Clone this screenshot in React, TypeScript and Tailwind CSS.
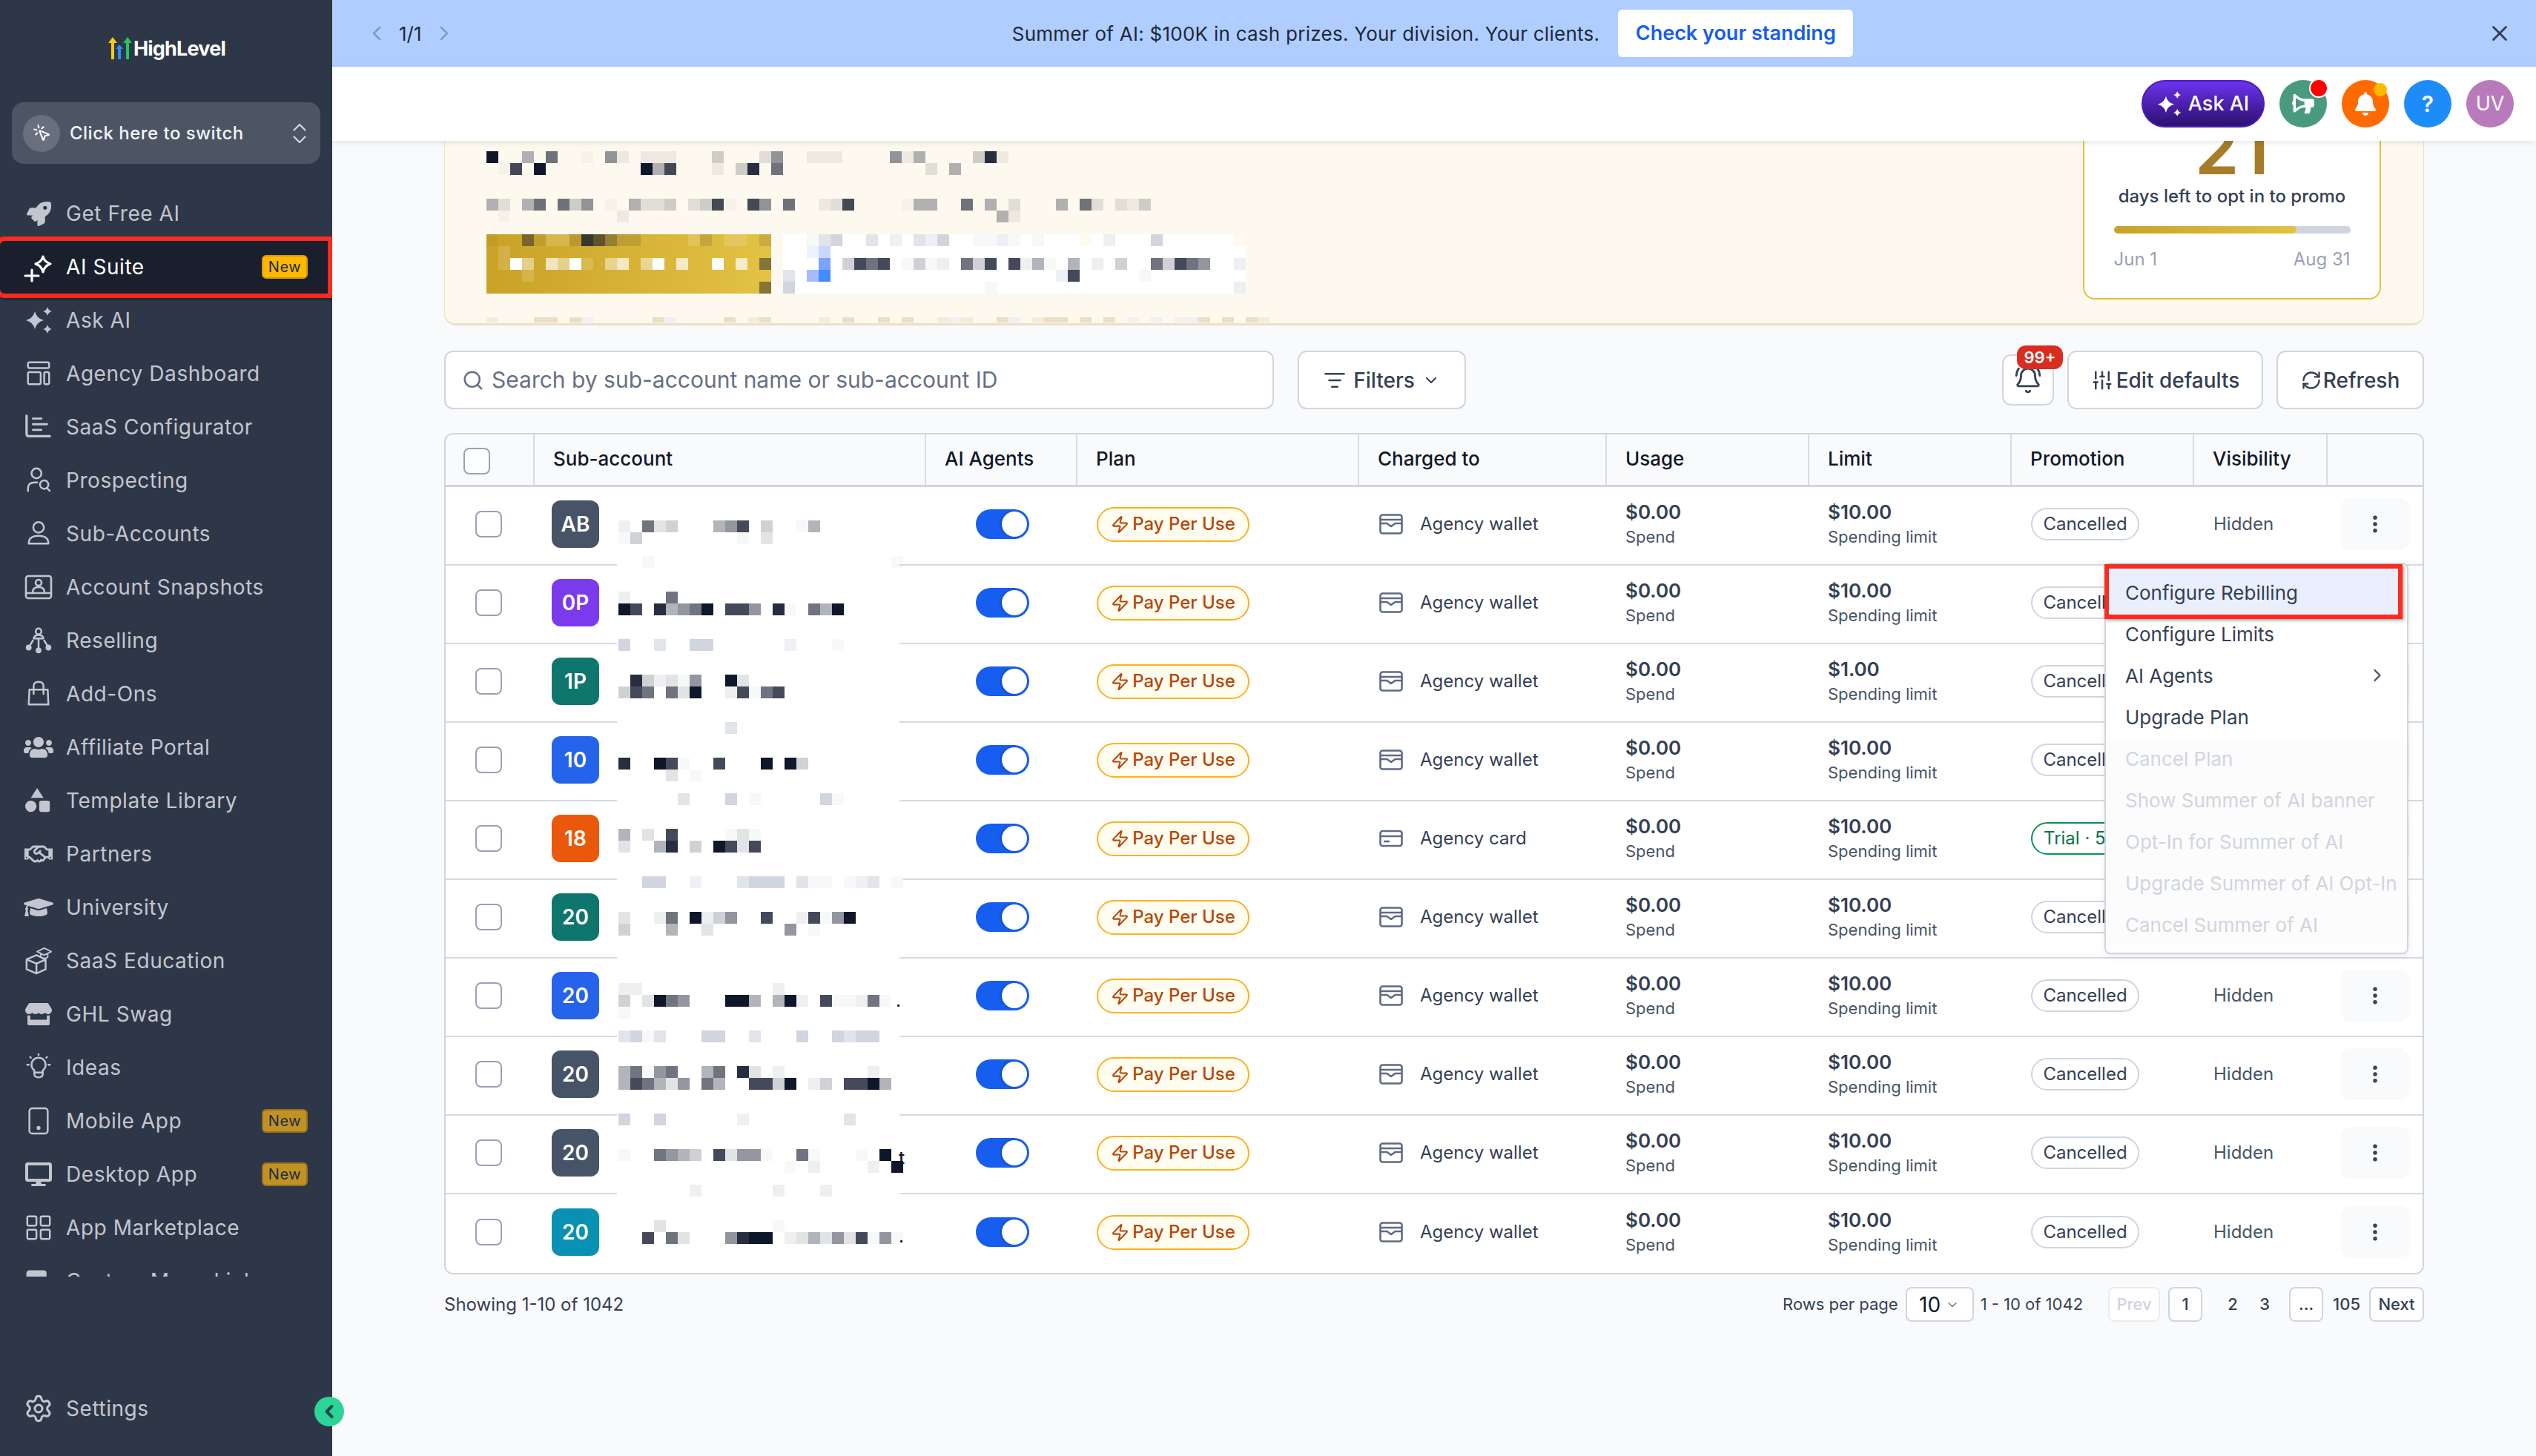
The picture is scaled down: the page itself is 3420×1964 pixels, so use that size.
import React from "react";
import {
  BellRing, ChevronDown, ChevronLeft, ChevronRight, ChevronsUpDown, EllipsisVertical, ListFilter,
  MousePointerClick, RefreshCw, Search, Settings, SlidersVertical, X, Zap,
} from "lucide-react";
import { FaBell, FaBullhorn, FaDesktop, FaGraduationCap, FaRegHandshake, FaRocket, FaStore, FaUsers } from "react-icons/fa";

const CELL: Record<string, string> = {
  "1": "rgba(15,23,42,.03)", "2": "rgba(15,23,42,.07)", "3": "rgba(15,23,42,.12)", "4": "rgba(15,23,42,.2)",
  "5": "rgba(15,23,42,.32)", "6": "rgba(15,23,42,.45)", "7": "rgba(15,23,42,.6)", "8": "rgba(15,23,42,.78)",
  x: "rgba(15,23,42,.9)", "9": "#0f172a", l: "#d1d5e0", m: "#e1e5e9", n: "#eff0f5", o: "#f7f8fa",
  w: "#ffffff", W: "rgba(255,255,255,.15)", Y: "rgba(255,255,255,.45)", Z: "rgba(255,255,255,.7)",
  c: "#fefaf0", t: "#e9dec6", u: "#f3ecdc", b: "#428cff", P: "#7ba3ff", p: "#a5baff", q: "#c7d7ff", r: "#eef2ff",
};

function MosaicRow({ cells, h = 16 }: { cells: string; h?: number }) {
  return (
    <div className="flex" style={{ height: h }}>
      {cells.split("").map((ch, i) => (
        <div key={i} className="w-4 shrink-0" style={{ background: CELL[ch] ?? "transparent" }} />
      ))}
    </div>
  );
}

const tableMosaic: Record<number, string> = {
  700: "2.734...568.4..15",
  716: "14........1.3",
  748: "..1....................1",
  796: "2...7",
  812: "98.x5679.886.x1.759",
  860: "l..m..ll......n...o",
  908: ".x42316..93",
  924: "487.739..28178",
  972: ".........m",
  1020: "x..981..8...9.94",
  1036: "....3.1",
  1068: ".....m...l.1.....lo",
  1116: "5.3.8....131",
  1132: "3..5x.4.9838",
  1180: "..ll..n...mlll.moo.onm.o",
  1228: "3..27.9246..8..28169",
  1244: "4...5..3......6.1",
  1324: "22...........2",
  1340: "4.3976...995.592.811271",
  1356: "1",
  1388: "mlom...ll..m...l..lmll",
  1436: "57167..57.x3.2.......2",
  1452: "587536.75..8849.24.8895",
  1500: "l..l......n........m",
  1548: "1..7654.83661..71...1.9",
  1564: "..............1.2....2.9",
  1596: "......2......2...2",
  1644: "...3.........1",
  1660: "..8.73...6x99.2353638161",
};

const nav: { label: string; icon: React.ReactNode; badge?: "bright" | "dim"; active?: boolean }[] = [];

function Svg({ children, w = 40 }: { children: React.ReactNode; w?: number }) {
  return (
    <svg width={w} height={w} viewBox="0 0 40 40" fill="none" stroke="currentColor" strokeWidth="2.6" strokeLinecap="round" strokeLinejoin="round">
      {children}
    </svg>
  );
}

const Spark = ({ cx, cy, r }: { cx: number; cy: number; r: number }) => (
  <path
    fill="currentColor"
    stroke="none"
    d={`M${cx} ${cy - r}Q${cx + r * 0.2} ${cy - r * 0.2} ${cx + r} ${cy}Q${cx + r * 0.2} ${cy + r * 0.2} ${cx} ${cy + r}Q${cx - r * 0.2} ${cy + r * 0.2} ${cx - r} ${cy}Q${cx - r * 0.2} ${cy - r * 0.2} ${cx} ${cy - r}Z`}
  />
);

nav.push(
  { label: "Get Free AI", icon: <FaRocket size={33} /> },
  {
    label: "AI Suite", active: true, badge: "bright",
    icon: (
      <Svg w={42}>
        <path d="M2 32h18M11 24v15" strokeWidth="3.2" />
        <path d="M26 6q1.5 7 10 10q-8.500 3-10 11q-1.500-8-10-11q8.500-3 10-10Z" strokeWidth="3.2" />
      </Svg>
    ),
  },
  { label: "Ask AI", icon: <Svg><Spark cx={15} cy={20} r={12} /><Spark cx={32} cy={8} r={6} /><Spark cx={32} cy={32} r={6} /></Svg> },
  {
    label: "Agency Dashboard",
    icon: <Svg w={38}><rect x="5" y="4" width="30" height="8" rx="2" /><rect x="5" y="18" width="18" height="17" rx="2" /><rect x="28" y="18" width="7" height="17" rx="2" /></Svg>,
  },
  {
    label: "SaaS Configurator",
    icon: <Svg w={38}><path d="M3 4v26q0 3 3 3h30" strokeWidth="3.4" /><path d="M12 8h12M12 16h20M12 24h12" strokeWidth="3" /></Svg>,
  },
  {
    label: "Prospecting",
    icon: <Svg w={38}><circle cx="17" cy="10" r="7" /><path d="M5 35v-4q0-8 10-8h3" /><circle cx="28" cy="26" r="6" /><path d="M32 31l4 4" /></Svg>,
  },
  {
    label: "Sub-Accounts",
    icon: <Svg w={38}><circle cx="20" cy="11" r="7.500" /><path d="M6 34q0-11 14-11t14 11Z" /></Svg>,
  },
  {
    label: "Account Snapshots",
    icon: <Svg w={40}><rect x="3" y="5" width="34" height="30" rx="3" /><path d="M3 28h34" /><circle cx="20" cy="14" r="4" /><path d="M12 27q0-7 8-7t8 7" /></Svg>,
  },
  {
    label: "Reselling",
    icon: <Svg w={38}><circle cx="20" cy="7" r="4" /><path d="M13 17q1-5 7-5t7 5ZM20 17v15M12 20l-5 8M28 20l5 8" /><circle cx="6" cy="30" r="2.800" fill="currentColor" /><circle cx="20" cy="34" r="2.800" fill="currentColor" /><circle cx="34" cy="30" r="2.800" fill="currentColor" /></Svg>,
  },
  {
    label: "Add-Ons",
    icon: <Svg w={38}><path d="M7 14h26l1 21H6Z" /><path d="M13 20v-11q0-6 7-6t7 6v11" /></Svg>,
  },
  { label: "Affiliate Portal", icon: <FaUsers size={40} /> },
  {
    label: "Template Library",
    icon: <Svg w={38}><path fill="currentColor" stroke="none" d="M18 2l9 14H9Z" /><circle cx="9" cy="28" r="8" fill="currentColor" stroke="none" /><rect x="21" y="20" width="15" height="16" rx="3" fill="currentColor" stroke="none" /></Svg>,
  },
  { label: "Partners", icon: <FaRegHandshake size={38} /> },
  { label: "University", icon: <FaGraduationCap size={40} /> },
  {
    label: "SaaS Education",
    icon: <Svg w={38}><path d="M3 18l14-6 13 6v14l-13 6-14-6ZM3 18l14 6 13-6M17 24v14" /><path d="M18 7l10-5 10 5-10 5ZM23 10v5q5 3 10 0v-5" strokeWidth="2" /></Svg>,
  },
  { label: "GHL Swag", icon: <FaStore size={36} /> },
  {
    label: "Ideas",
    icon: <Svg w={38}><path d="M14 24q-4-3-4-8a10 10 0 0 1 20 0q0 5-4 8v5q0 5-6 5t-6-5Z" /><path d="M20 1v1M4 16h2M34 16h2M8 5l1 1M32 5l-1 1M14 27h12" /></Svg>,
  },
  {
    label: "Mobile App", badge: "dim",
    icon: <Svg w={38}><rect x="7" y="2" width="26" height="36" rx="4" /><circle cx="20" cy="30" r="1.500" fill="currentColor" /></Svg>,
  },
  { label: "Desktop App", badge: "dim", icon: <FaDesktop size={36} /> },
  {
    label: "App Marketplace",
    icon: <Svg w={38}><rect x="4" y="4" width="13" height="13" rx="2" /><rect x="23" y="4" width="13" height="13" rx="2" /><rect x="4" y="23" width="13" height="13" rx="2" /><rect x="23" y="23" width="13" height="13" rx="2" /></Svg>,
  },
  {
    label: "Custom Menu Links",
    icon: <Svg w={38}><rect x="4" y="6" width="26" height="28" rx="3" fill="currentColor" /></Svg>,
  },
);

function NavItem({ item }: { item: (typeof nav)[number] }) {
  return (
    <div
      className={
        "flex h-[72px] shrink-0 items-center pl-[32px] pr-[33px] text-[28px] tracking-[0.02em] " +
        (item.active ? "relative z-10 text-white" : "text-[#c3c6ce]")
      }
    >
      {item.active && (
        <div className="absolute left-[-6px] right-0 top-[-5px] bottom-[-6px] -z-10 rounded-l-xl border-[6px] border-[#ff2a1f] bg-[#1a1f2e] shadow-[2px_2px_4px_rgba(0,0,0,.4)]" />
      )}
      <span className="flex w-[40px] shrink-0 justify-center">{item.icon}</span>
      <span className="ml-[17px] flex-1 whitespace-nowrap">{item.label}</span>
      {item.badge && (
        <span
          className={
            "flex h-[32px] w-[62px] items-center justify-center rounded-md border-2 text-[20px] tracking-[0.03em] " +
            (item.badge === "bright"
              ? "border-[#d89a06] bg-[#ffb800] text-[#1a2b45]"
              : "border-[#9a6f1f] bg-[#c09224] text-[#1c2b45]")
          }
        >
          New
        </span>
      )}
    </div>
  );
}

function Sidebar() {
  return (
    <aside className="relative z-20 flex h-[1964px] w-[448px] shrink-0 flex-col bg-[#2e3748]">
      <div className="flex h-[138px] shrink-0 items-start justify-center pl-[2px] pt-[50px]">
        <svg width="32" height="30" viewBox="0 0 32 30" className="mr-[2px]">
          <path d="M0 8L6 0l6 8H8v22H4V8Z" fill="#facc15" />
          <path d="M10 16l5-6 5 6h-3v14h-4V16Z" fill="#2f8cf0" />
          <path d="M20 8l6-8 6 8h-4v22h-4V8Z" fill="#22c55e" />
        </svg>
        <span className="text-[27px] font-bold leading-[32px] tracking-[-0.03em] text-white">HighLevel</span>
      </div>
      <div className="mx-4 flex h-[83px] shrink-0 items-center rounded-2xl bg-[#4b5564] pl-[15px] pr-[10px]">
        <span className="flex h-[50px] w-[50px] items-center justify-center rounded-full bg-[#687080] text-white">
          <MousePointerClick size={25} strokeWidth={2} />
        </span>
        <span className="ml-[13px] flex-1 whitespace-nowrap text-[24px] font-medium tracking-[0.02em] text-[#f3f4f6]">Click here to switch</span>
        <ChevronsUpDown size={36} strokeWidth={1.5} className="text-[#d1d5db]" />
      </div>
      <nav className="mt-[31px] flex h-[1470px] shrink-0 flex-col overflow-hidden pr-0">
        {nav.map((item) => (
          <NavItem key={item.label} item={item} />
        ))}
      </nav>
      <div className="mt-[142px] flex h-[72px] shrink-0 items-center pl-[32px] text-[28px] tracking-[0.02em] text-[#c3c6ce]">
        <span className="flex w-[40px] justify-center"><Settings size={40} strokeWidth={1.8} /></span>
        <span className="ml-[17px]">Settings</span>
      </div>
      <button className="absolute left-[424px] top-[1884px] flex h-[40px] w-[40px] items-center justify-center rounded-full bg-[#2dd498] text-[#0e4a44]">
        <ChevronLeft size={28} strokeWidth={3.4} />
      </button>
    </aside>
  );
}

function Banner() {
  return (
    <div className="relative flex h-[90px] shrink-0 items-center justify-center bg-[#b0cdff] text-[#1d2939]">
      <div className="absolute left-[44px] flex items-center text-[26px]">
        <ChevronLeft size={32} strokeWidth={1.8} className="text-[#7d93bf]" />
        <span className="mx-[14px]">1/1</span>
        <ChevronRight size={32} strokeWidth={1.8} className="text-[#7d93bf]" />
      </div>
      <span className="ml-[-4px] text-[26px] tracking-[0.01em]">Summer of AI: $100K in cash prizes. Your division. Your clients.</span>
      <button className="ml-[25px] flex h-[64px] w-[317px] items-center justify-center rounded-md bg-white text-[27px] font-semibold text-[#155eef]">
        Check your standing
      </button>
      <X size={34} strokeWidth={2} className="absolute right-[32px] text-[#344054]" />
    </div>
  );
}

function TopBar() {
  const circle = "relative flex h-[64px] w-[64px] items-center justify-center rounded-full text-white";
  return (
    <header className="relative z-10 flex h-[100px] shrink-0 items-center justify-end gap-[20px] bg-white pr-[30px] shadow-[0_2px_8px_rgba(16,24,40,.1)]">
      <button className="flex h-[64px] w-[166px] items-center justify-center gap-[8px] rounded-full border-2 border-[#4a1fb8] bg-gradient-to-b from-[#6d33f0] to-[#2d1070] text-[27px] font-medium text-white">
        <svg width="34" height="36" viewBox="0 0 40 40" className="text-white"><Spark cx={14} cy={21} r={13} /><Spark cx={32} cy={6} r={6} /><Spark cx={32} cy={34} r={6} /></svg>
        Ask AI
      </button>
      <span className={circle + " bg-[#4a9a80]"}>
        <FaBullhorn size={30} className="-scale-x-100" />
        <span className="absolute right-[-2px] top-[-2px] h-[26px] w-[26px] rounded-full border-2 border-white bg-[#ff0000]" />
      </span>
      <span className={circle + " bg-[#ff6a00]"}>
        <FaBell size={32} />
        <span className="absolute right-[3px] top-[4px] h-[18px] w-[18px] rounded-full bg-[#ffb800]" />
      </span>
      <span className={circle + " bg-[#1e8cf8] text-[30px] font-semibold"}>?</span>
      <span className={circle + " bg-[#b87abb] text-[27px]"}>UV</span>
    </header>
  );
}

function Promo() {
  return (
    <section className="mx-auto mt-[-2px] flex h-[251px] w-[2670px] justify-between overflow-hidden rounded-b-2xl border-x border-b-[3px] border-[#eedfc4] bg-[#fef9ef] pl-[56px] pr-[57px]">
      <div className="flex flex-col">
        <div className="h-[16px]" />
        <MosaicRow cells="9..5.7..1.62.222...4...36..222....625....4x2" />
        <MosaicRow cells=".18.9........958...2.4x.7............3.5" />
        <div className="h-[32px]" />
        <MosaicRow cells="53.57.746.1.5334.3481.86.7..238....155..7.5.3...5.73.324" />
        <MosaicRow cells=".1.........2...............................52" />
        <div className="h-[16px]" />
        <div className="flex">
          <div className="w-[384px] bg-gradient-to-r from-[#c9a227] to-[#e3c244]">
            <MosaicRow cells="1..62WW387533....W3.WW.3" />
            <MosaicRow cells=".W" />
            <MosaicRow cells=".WwY.ZYwW.YZ.Yw.Z..w.Z.6" />
            <MosaicRow cells="...W" />
            <MosaicRow cells=".......................6" />
          </div>
          <div className="ml-4 w-[624px] bg-white">
            <MosaicRow cells="..1ml..m.n.mnl..oono.o...c.n...l......c" />
            <MosaicRow cells="..rq" />
            <MosaicRow cells="...P.4878.1412.748.8251.5.2.4..74876..2" />
            <MosaicRow cells="m.pb...................n8.....o" />
            <MosaicRow cells="l................o....................2" />
          </div>
        </div>
        <div className="h-[32px]" />
        <MosaicRow h={7} cells="u...tt.tn.....tn....t.ut....u.t..t.t..unu..tn.utt.t.t.n.n.nnt.t.tu" />
      </div>
      <div className="flex h-[216px] w-[402px] shrink-0 flex-col items-center overflow-hidden rounded-b-2xl border-x-2 border-b-2 border-[#e8bc3e] bg-white">
        <div className="mt-[-36px] h-[80px] text-[96px] font-semibold leading-[96px] text-[#a67c2a]">21</div>
        <div className="mt-[17px] whitespace-nowrap text-[24px] font-medium leading-[32px] text-[#344054]">days left to opt in to promo</div>
        <div className="mt-[24px] h-[10px] w-[319px] overflow-hidden rounded-full bg-[#d0d5dd]">
          <div className="h-full w-[246px] rounded-full bg-gradient-to-r from-[#c9a227] to-[#e3c244]" />
        </div>
        <div className="mt-[19px] flex w-[319px] justify-between text-[24px] leading-[32px] text-[#98a2b3]">
          <span>Jun 1</span>
          <span>Aug 31</span>
        </div>
      </div>
    </section>
  );
}

function Toolbar() {
  const btn = "flex h-[79px] items-center justify-center rounded-xl border-2 border-[#d0d5dd] bg-white text-[28px] font-medium text-[#344054]";
  return (
    <div className="mt-[34px] flex items-center">
      <div className="flex h-[79px] w-[1119px] items-center rounded-xl border-2 border-[#d0d5dd] bg-white pl-[22px] text-[30px] text-[#667085]">
        <Search size={30} strokeWidth={2} className="mr-[10px]" />
        Search by sub-account name or sub-account ID
      </div>
      <button className={btn + " ml-[32px] w-[227px] gap-[10px]"}>
        <ListFilter size={30} strokeWidth={2} />
        Filters
        <ChevronDown size={24} strokeWidth={2} />
      </button>
      <div className="flex-1" />
      <button className="relative flex h-[69px] w-[70px] items-center justify-center rounded-xl border-2 border-[#d0d5dd] bg-white text-[#344054]">
        <BellRing size={38} strokeWidth={1.8} />
        <span className="absolute right-[-14px] top-[-14px] flex h-[32px] w-[62px] items-center justify-center rounded-xl bg-[#d92d20] text-[22px] font-semibold text-white">99+</span>
      </button>
      <button className={btn + " ml-[18px] w-[264px] gap-[4px]"}>
        <SlidersVertical size={30} strokeWidth={2} />
        Edit defaults
      </button>
      <button className={btn + " ml-[18px] w-[199px] gap-[2px]"}>
        <RefreshCw size={28} strokeWidth={2} />
        Refresh
      </button>
    </div>
  );
}

const GRID = "grid grid-cols-[120px_528px_204px_380px_334px_273px_273px_246px_180px_1fr]";

const rows = [
  { a: "AB", c: "bg-[#475467]", limit: "$10.00" },
  { a: "0P", c: "bg-[#7c3aed]", limit: "$10.00" },
  { a: "1P", c: "bg-[#0f766e]", limit: "$1.00" },
  { a: "10", c: "bg-[#2563eb]", limit: "$10.00" },
  { a: "18", c: "bg-[#ea580c]", limit: "$10.00", card: true, trial: true },
  { a: "20", c: "bg-[#0f766e]", limit: "$10.00" },
  { a: "20", c: "bg-[#2563eb]", limit: "$10.00" },
  { a: "20", c: "bg-[#475467]", limit: "$10.00" },
  { a: "20", c: "bg-[#475467]", limit: "$10.00" },
  { a: "20", c: "bg-[#0891b2]", limit: "$10.00" },
];

function Checkbox({ className = "" }: { className?: string }) {
  return <span className={"block h-[36px] w-[36px] rounded-[8px] border-2 border-[#98a2b3] bg-white " + className} />;
}

function Head({ children }: { children?: React.ReactNode }) {
  return (
    <div className="flex items-center border-r-2 border-[#d8dce3] pl-[25px] pb-[3px] text-[26px] font-medium text-[#101828] last:border-r-0">
      {children}
    </div>
  );
}

function Row({ r, last }: { r: (typeof rows)[number]; last: boolean }) {
  return (
    <div className={GRID + " h-[106px] bg-white " + (last ? "" : "border-b-2 border-[#d5d9e2]")}>
      <div className="flex items-center pl-[40px] pb-[4px]"><Checkbox /></div>
      <div className="flex items-center pl-[23px] pb-[4px]">
        <span className={"flex h-[64px] w-[64px] items-center justify-center rounded-[12px] text-[28px] font-semibold text-white " + r.c}>{r.a}</span>
      </div>
      <div className="flex items-center pl-[67px] pb-[4px]">
        <span className="relative h-[40px] w-[72px] rounded-full bg-[#155eef]">
          <span className="absolute right-[3px] top-[3px] h-[34px] w-[34px] rounded-full bg-white shadow-[-2px_0_3px_rgba(0,0,0,.2)]" />
        </span>
      </div>
      <div className="flex items-center pl-[26px] pb-[4px]">
        <span className="flex h-[47px] w-[206px] items-center justify-center gap-[4px] rounded-full border-2 border-[#fdb022] bg-[#fffcf0] text-[24px] font-medium text-[#b54708]">
          <Zap size={25} strokeWidth={2} />
          Pay Per Use
        </span>
      </div>
      <div className="flex items-center pl-[27px] text-[24px] text-[#344054] pb-[4px]">
        {r.card ? (
          <svg width="32" height="28" viewBox="0 0 32 28" fill="none" stroke="#5d6b85" strokeWidth="2.6" className="mr-[23px]">
            <rect x="1.500" y="4" width="29" height="20" rx="3" />
            <path d="M1.500 11h29M6 18h8" />
          </svg>
        ) : (
          <svg width="32" height="28" viewBox="0 0 32 28" fill="none" stroke="#5d6b85" strokeWidth="2.6" strokeLinejoin="round" className="mr-[23px]">
            <rect x="1.500" y="1.500" width="29" height="25" rx="3" />
            <path d="M1.500 8h29M1.500 13h9l5.500 4 5.500-4h9" />
          </svg>
        )}
        {r.card ? "Agency card" : "Agency wallet"}
      </div>
      <div className="flex flex-col justify-center pl-[25px] pb-[4px]">
        <span className="text-[26px] font-semibold leading-[34px] text-[#344054]">$0.00</span>
        <span className="text-[22px] leading-[32px] text-[#475467]">Spend</span>
      </div>
      <div className="flex flex-col justify-center pl-[25px] pb-[4px]">
        <span className="text-[26px] font-semibold leading-[34px] text-[#344054]">{r.limit}</span>
        <span className="text-[22px] leading-[32px] text-[#475467]">Spending limit</span>
      </div>
      <div className="flex items-center pl-[26px] pb-[4px]">
        {r.trial ? (
          <span className="flex h-[44px] w-[180px] items-center whitespace-nowrap rounded-full border-2 border-[#079455] bg-white pl-[15px] text-[24px] text-[#067647]">Trial · 5 days</span>
        ) : (
          <span className="flex h-[44px] w-[146px] items-center justify-center rounded-full border-2 border-[#d0d5dd] bg-white text-[24px] text-[#344054]">Cancelled</span>
        )}
      </div>
      <div className="flex items-center pl-[26px] text-[24px] text-[#475467] pb-[4px]">Hidden</div>
      <div className="flex items-center pl-[17px] pb-[4px]">
        <span className="flex h-[70px] w-[94px] items-center justify-center rounded-[14px] bg-[#f9fafb] text-[#344054]">
          <EllipsisVertical size={30} strokeWidth={2.4} />
        </span>
      </div>
    </div>
  );
}

function BlurOverlay() {
  const ys = Array.from({ length: 63 }, (_, i) => 700 + i * 16);
  return (
    <div className="absolute left-[231px] top-[116px] z-[1] h-[1000px] w-[381px] bg-white pl-[2px]">
      {ys.map((y) => (
        <MosaicRow key={y} cells={tableMosaic[y] ?? ""} />
      ))}
      <span className="absolute left-[376px] top-[636px] text-[24px] leading-[24px] text-[#101828]">.</span>
      <span className="absolute left-[380px] top-[848px] text-[24px] font-medium leading-[24px] text-[#101828]">t</span>
      <span className="absolute left-[380px] top-[954px] text-[24px] leading-[24px] text-[#101828]">.</span>
    </div>
  );
}

function Menu() {
  const item = "flex h-[56px] items-center pl-[26px] text-[26px] whitespace-nowrap";
  const on = item + " text-[#344054]";
  const off = item + " bg-[#fcfcfd] text-[#d0d5dd]";
  return (
    <div className="absolute left-[2237px] top-[173px] z-[2] w-[410px] rounded-lg border-2 border-[#d0d5dd] bg-white py-[10px] shadow-[0_4px_10px_rgba(16,24,40,.08)]">
      <div className="relative">
        <div className="absolute left-[-2px] right-[6px] top-[-10px] bottom-[-8px] border-[6px] border-[#ff2a1f] bg-[#e9effd] shadow-[2px_2px_4px_rgba(0,0,0,.35)]" />
        <div className={on + " relative"}>Configure Rebilling</div>
      </div>
      <div className={on}>Configure Limits</div>
      <div className={on + " justify-between pr-[26px]"}>
        AI Agents
        <ChevronRight size={28} strokeWidth={2} className="text-[#475467]" />
      </div>
      <div className={on}>Upgrade Plan</div>
      <div className={off}>Cancel Plan</div>
      <div className={off}>Show Summer of AI banner</div>
      <div className={off}>Opt-In for Summer of AI</div>
      <div className={off}>Upgrade Summer of AI Opt-In</div>
      <div className={off}>Cancel Summer of AI</div>
    </div>
  );
}

function Table() {
  return (
    <div className="relative mt-[32px] overflow-hidden rounded-xl border-2 border-[#d0d5dd]">
      <div className={GRID + " h-[71px] border-b-[3px] border-[#d0d5dd] bg-[#f9fafc]"}>
        <Head><Checkbox className="ml-[-1px] mt-[6px]" /></Head>
        <Head>Sub-account</Head>
        <Head>AI Agents</Head>
        <Head>Plan</Head>
        <Head>Charged to</Head>
        <Head>Usage</Head>
        <Head>Limit</Head>
        <Head>Promotion</Head>
        <Head>Visibility</Head>
        <Head />
      </div>
      {rows.map((r, i) => (
        <Row key={i} r={r} last={i === rows.length - 1} />
      ))}
      <BlurOverlay />
      <Menu />
    </div>
  );
}

function Pager() {
  const box = "flex h-[47px] items-center justify-center rounded-lg border-2 border-[#d0d5dd] bg-white";
  return (
    <div className="mt-[17px] flex h-[47px] items-center text-[24px] text-[#344054]">
      <span className="flex-1">Showing 1-10 of 1042</span>
      <span className="text-[22px]">Rows per page</span>
      <span className={box + " ml-[10px] w-[92px] gap-[6px] text-[28px] text-[#101828]"}>
        10
        <ChevronDown size={20} strokeWidth={1.6} className="text-[#667085]" />
      </span>
      <span className="ml-[9px] text-[22px]">1 - 10 of 1042</span>
      <span className={box + " ml-[34px] w-[70px] border-[#eaecf0] text-[22px] font-medium text-[#d0d5dd]"}>Prev</span>
      <span className={box + " ml-[11px] w-[46px] border-[#2970ff] text-[22px] font-medium"}>1</span>
      <span className="flex w-[56px] justify-center pl-[26px] text-[22px] font-medium">2</span>
      <span className="flex w-[56px] justify-center text-[22px] font-medium">3</span>
      <span className={box + " ml-[5px] w-[46px] text-[22px] font-medium"}>...</span>
      <span className="ml-[13px] text-[22px] font-medium">105</span>
      <span className={box + " ml-[12px] w-[74px] text-[22px] font-medium"}>Next</span>
    </div>
  );
}

export default function App() {
  return (
    <div className="flex h-[1964px] w-[3420px] overflow-hidden bg-[#f9fafc] [font-family:Inter,'Liberation_Sans',sans-serif]">
      <Sidebar />
      <main className="flex min-w-0 flex-1 flex-col">
        <Banner />
        <TopBar />
        <div className="flex-1 overflow-hidden px-[151px]">
          <Promo />
          <Toolbar />
          <Table />
          <Pager />
        </div>
      </main>
    </div>
  );
}
